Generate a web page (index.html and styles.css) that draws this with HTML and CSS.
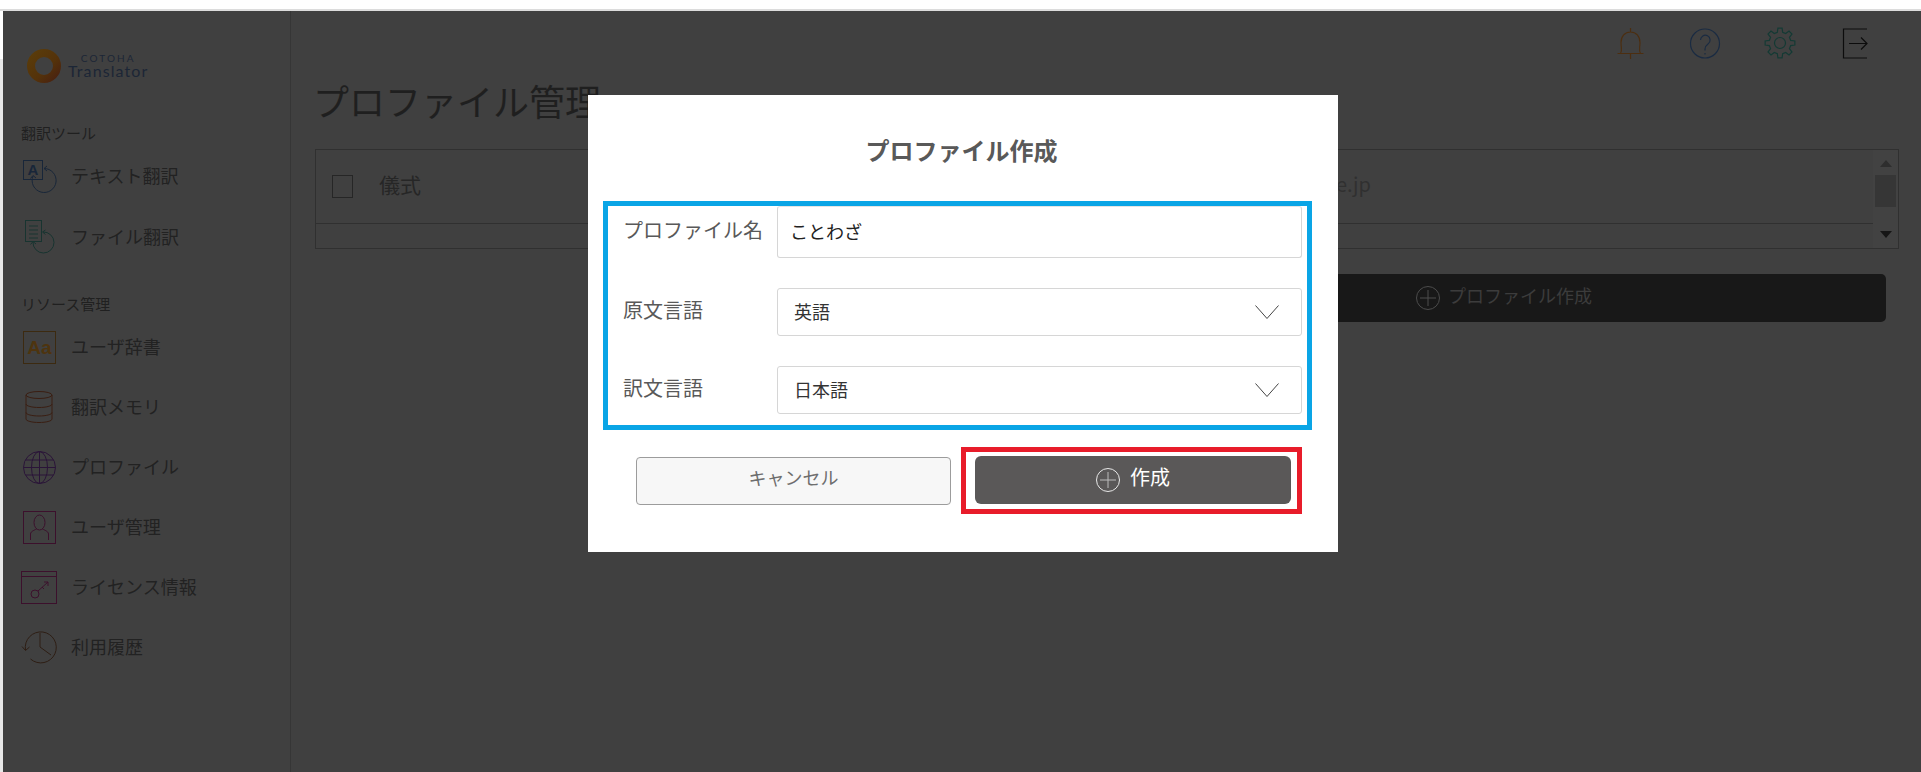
FILE: index.html
```html
<!DOCTYPE html>
<html lang="ja">
<head>
<meta charset="utf-8">
<title>プロファイル管理</title>
<link rel="stylesheet" href="styles.css">
</head>
<body>
<div class="topstrip"></div>
<div class="shell">
  <div class="edge"></div>
  <aside class="sidebar">
    <div class="logo">
      <svg class="logo-ring" width="36" height="36" viewBox="0 0 36 36">
        <defs><linearGradient id="ringg" x1="0" y1="0" x2="1" y2="1"><stop offset="0" stop-color="#5a3c0a"/><stop offset=".6" stop-color="#54320a"/><stop offset="1" stop-color="#4a2210"/></linearGradient></defs>
        <circle cx="18" cy="18" r="13" fill="none" stroke="url(#ringg)" stroke-width="8"/>
      </svg>
      <div class="logo-text"><span class="logo-top">COTOHA</span><span class="logo-bottom">Translator</span></div>
    </div>
    <div class="section-label first">翻訳ツール</div>
    <nav class="nav tight">
      <a class="nav-item"><svg class="nav-icon" viewBox="0 0 38 38" fill="none" stroke="#182639"><rect x="2.500" y="3.500" width="19" height="19"/><text x="12" y="18" class="icon-a">A</text><path d="M23 11.500A12 12 0 1 1 12 19M26 9l-3 2.500 3 2.500M9.500 21.500 12 18.500 15 21"/></svg><span>テキスト翻訳</span></a>
      <a class="nav-item"><svg class="nav-icon" viewBox="0 0 38 38" fill="none" stroke="#183430"><rect x="4.500" y="2.500" width="16" height="21"/><path d="M8 8h9M8 12h9M8 16h9M8 20h9M22 14a10.500 10.500 0 1 1-10 10M24.500 12l-3 2 3 2.500M9.500 26.500l2.500-3 3 2.500"/></svg><span>ファイル翻訳</span></a>
    </nav>
    <div class="section-label second">リソース管理</div>
    <nav class="nav">
      <a class="nav-item"><svg class="nav-icon" viewBox="0 0 38 38" fill="none" stroke="#3c2a10"><rect x="2.500" y="3.500" width="32" height="32"/><text x="18.500" y="26" class="icon-aa">Aa</text></svg><span>ユーザ辞書</span></a>
      <a class="nav-item"><svg class="nav-icon" viewBox="0 0 38 38" fill="none" stroke="#3a1e12"><ellipse cx="18" cy="7" rx="13" ry="3.500"/><path d="M5 7v24c0 2 6 3.500 13 3.500s13-1.500 13-3.500V7M5 16c0 2 6 3.500 13 3.500s13-1.500 13-3.500M5 24.500c0 2 6 3.500 13 3.500s13-1.500 13-3.500"/></svg><span>翻訳メモリ</span></a>
      <a class="nav-item"><svg class="nav-icon" viewBox="0 0 38 38" fill="none" stroke="#2a1438"><circle cx="18.500" cy="19.500" r="16"/><ellipse cx="18.500" cy="19.500" rx="8" ry="16"/><path d="M18.500 3.500v32M2.500 19.500h32M4.500 12h28M4.500 27h28"/></svg><span>プロファイル</span></a>
      <a class="nav-item"><svg class="nav-icon" viewBox="0 0 38 38" fill="none" stroke="#3c102c"><rect x="2.500" y="3.500" width="32" height="32"/><ellipse cx="18.500" cy="14.500" rx="5.500" ry="7.500"/><path d="M9.500 32v-6c0-3 5-4 6.500-5.500M27.500 32v-6c0-3-5-4-6.500-5.500"/></svg><span>ユーザ管理</span></a>
      <a class="nav-item"><svg class="nav-icon" viewBox="0 0 38 38" fill="none" stroke="#3c102c"><rect x=".5" y="3.500" width="35" height="32"/><path d="M.5 8.500h35M17 23l10-9M23 14h4v4M21 19l2 2"/><circle cx="14" cy="26" r="4"/></svg><span>ライセンス情報</span></a>
      <a class="nav-item"><svg class="nav-icon" viewBox="0 0 38 38" fill="none" stroke="#2e1e14"><path d="M4.500 22A15.500 15.500 0 1 1 9.500 31M1 18.500l3.500 4 4-3.500M19 5v14l11 8"/></svg><span>利用履歴</span></a>
    </nav>
  </aside>
  <main class="main">
    <header class="header">
      <svg class="head-icon" viewBox="0 0 30 32" fill="none" stroke="#4c2e10" stroke-width="1.200"><path d="M2.500 25.500h26M5.500 25.500c2-3 .5-6 .5-11C6 8 10 4 15.500 4S25 8 25 14.500c0 5-1.500 8 .5 11M15.500 0v4M15.500 25.500V31"/></svg>
      <svg class="head-icon" viewBox="0 0 30 32" fill="none" stroke="#1a2b42" stroke-width="1.200"><circle cx="15" cy="15.500" r="14.500"/><path d="M10.500 12a4.800 4.800 0 1 1 7.500 4c-2 1.500-3 2.500-3 5v1.500M15 25v1.500"/></svg>
      <svg class="head-icon" viewBox="0 0 30 32" fill="none" stroke="#143a34" stroke-width="1.200"><polygon points="12.340,4.330 12.910,.15 17.090,.15 17.660,4.330 20.670,5.570 24.030,3.020 26.980,5.970 24.430,9.330 25.670,12.340 29.850,12.910 29.850,17.090 25.670,17.660 24.430,20.670 26.980,24.030 24.030,26.980 20.670,24.430 17.660,25.670 17.090,29.850 12.910,29.850 12.340,25.670 9.330,24.430 5.970,26.980 3.020,24.030 5.570,20.670 4.330,17.660 .15,17.090 .15,12.910 4.330,12.340 5.570,9.330 3.020,5.970 5.970,3.020 9.330,5.570"/><circle cx="15" cy="15" r="5.500"/></svg>
      <svg class="head-icon" viewBox="0 0 30 32" fill="none" stroke="#0c0c0c" stroke-width="1.200"><path d="M27 1H3.500v29H27"/><path d="M9 15.500h18M21 9.500l6 6-6 6"/></svg>
    </header>
    <h1 class="page-title">プロファイル管理</h1>
    <div class="table">
      <div class="rows">
        <div class="row head">
          <span class="checkbox"></span>
          <span class="cell-name">儀式</span>
          <span class="cell-mail">e.jp</span>
        </div>
        <div class="row"></div>
      </div>
      <div class="scrollbar">
        <span class="arrow up"></span>
        <span class="thumb"></span>
        <span class="arrow down"></span>
      </div>
    </div>
    <button class="bg-create" type="button">
      <svg class="plus" viewBox="0 0 24 24" fill="none" stroke="#4c4c4c"><circle cx="12" cy="12" r="11.500"/><path d="M12 4v16M4 12h16"/></svg>
      <span class="lift">プロファイル作成</span>
    </button>
  </main>
</div>
<div class="modal-layer">
  <section class="modal">
    <h2 class="modal-title">プロファイル作成</h2>
    <div class="form-box">
      <div class="form-row tall">
        <label class="form-label">プロファイル名</label>
        <input class="text-input" type="text" value="ことわざ">
      </div>
      <div class="form-row">
        <label class="form-label">原文言語</label>
        <div class="select"><span class="lift-small">英語</span><svg class="chev" viewBox="0 0 24 14" fill="none" stroke="#444"><path d="M.5.500 12 13.500 23.500.500"/></svg></div>
      </div>
      <div class="form-row">
        <label class="form-label">訳文言語</label>
        <div class="select"><span class="lift-small">日本語</span><svg class="chev" viewBox="0 0 24 14" fill="none" stroke="#444"><path d="M.5.500 12 13.500 23.500.500"/></svg></div>
      </div>
    </div>
    <div class="actions">
      <button class="btn-cancel" type="button"><span class="lift">キャンセル</span></button>
      <div class="red-box">
        <button class="btn-create" type="button">
          <svg class="plus" viewBox="0 0 24 24" fill="none" stroke="#e8e8e8"><circle cx="12" cy="12" r="11.500"/><path d="M12 4v16M4 12h16" stroke="#bbb"/></svg>
          <span class="lift">作成</span>
        </button>
      </div>
    </div>
  </section>
</div>
</body>
</html>
```
FILE: styles.css
```css
* { box-sizing: border-box; }
html, body { margin: 0; height: 772px; overflow: hidden; }
body {
  background: #fff;
  font-family: "Noto Sans CJK JP", "Noto Sans", sans-serif;
  position: relative;
}
.topstrip { height: 11px; background: #fff; border-bottom: 2px solid #dcdcdc; }
.shell { display: flex; height: 761px; }
.edge { width: 3px; background: linear-gradient(#fff 0, #fff 48px, #e8e8e8 48px, #e8e8e8 100%); }
.lift { display: inline-block; padding-bottom: 7px; }
.lift-small { padding-bottom: 3px; }

.sidebar { width: 288px; flex: none; background: #404040; border-right: 1px solid #363636; }
.logo { display: flex; align-items: center; height: 34px; margin-top: 37px; padding-left: 23px; }
.logo-ring { flex: none; margin-top: 2px; }
.logo-text { display: flex; flex-direction: column; align-items: center; margin-left: 6px; font-family: Lato, sans-serif; color: #1c2636; }
.logo-top { font-size: 10px; line-height: 11px; letter-spacing: 2.1px; }
.logo-bottom { font-size: 16px; line-height: 14px; letter-spacing: 1.1px; }
.section-label { padding-left: 18px; font-size: 15px; line-height: 20px; color: #202020; }
.section-label.first { margin-top: 41px; }
.section-label.second { margin-top: 27px; }
.nav { display: flex; flex-direction: column; margin-top: 3px; }
.nav.tight { gap: 1px; }
.nav-item { display: flex; align-items: center; height: 60px; padding-left: 18px; font-size: 18px; color: #222; }
.nav-item span { padding-bottom: 3px; }
.nav-icon { width: 38px; height: 38px; flex: none; margin-right: 12px; }
.icon-a { font-family: "Liberation Sans", sans-serif; font-size: 15px; font-weight: 700; fill: #182639; stroke: none; text-anchor: middle; }
.icon-aa { font-family: "Liberation Sans", sans-serif; font-size: 19px; font-weight: 700; fill: #4e340e; stroke: none; text-anchor: middle; }

.main { flex: 1; min-width: 0; display: flex; flex-direction: column; background: #404040; padding: 0 22px 0 24px; }
.header { display: flex; justify-content: flex-end; gap: 45px; padding: 17px 29px 0 0; height: 49px; }
.head-icon { width: 30px; height: 32px; flex: none; overflow: visible; }
.page-title { margin: 18px 0 27px -2px; font-size: 36px; line-height: 44px; font-weight: 400; color: #1f1f1f; }

.table { display: flex; height: 100px; border: 1px solid #303030; }
.rows { flex: 1; min-width: 0; }
.row.head { display: flex; align-items: center; height: 74px; padding-left: 16px; border-bottom: 1px solid #303030; }
.checkbox { width: 21px; height: 23px; flex: none; border: 1px solid #262626; }
.cell-name { margin-left: 26px; padding-bottom: 6px; font-size: 21px; color: #262626; }
.cell-mail { margin-left: auto; padding: 0 502px 6px 0; font-size: 20px; color: #303030; }
.scrollbar { width: 25px; flex: none; display: flex; flex-direction: column; align-items: center; background: #424242; }
.arrow { width: 0; height: 0; border-left: 6px solid transparent; border-right: 6px solid transparent; }
.arrow.up { margin-top: 10px; border-bottom: 7px solid #2e2e2e; }
.thumb { width: 21px; height: 32px; margin-top: 8px; background: #363636; }
.arrow.down { margin-top: 24px; border-top: 7px solid #161616; }

.bg-create {
  display: flex; align-items: center; justify-content: center; gap: 8px;
  align-self: flex-end; width: 764px; height: 48px; margin: 25px 13px 0 0;
  background: #181818; border: 0; border-radius: 5px;
  font-family: inherit; font-size: 18px; color: #3c3c3c;
}
.plus { width: 24px; height: 24px; flex: none; }

.modal-layer { position: absolute; inset: 0; display: flex; justify-content: center; padding: 95px 0 0 5px; pointer-events: none; }
.modal { width: 750px; height: 457px; background: #fff; padding: 0 26px 0 15px; pointer-events: auto; }
.modal-title { margin: 0; padding: 35px 2px 31px 10px; font-size: 24px; line-height: 40px; font-weight: 700; text-align: center; color: #595959; }
.form-box { display: flex; flex-direction: column; gap: 30px; height: 229px; border: 5px solid #0aa5e6; padding: 0 5px 11px 0; }
.form-row { display: flex; align-items: center; height: 48px; }
.form-row.tall { height: 52px; }
.form-label { width: 169px; flex: none; padding: 0 0 6px 15px; font-size: 20px; color: #595959; white-space: nowrap; }
.text-input {
  flex: 1; min-width: 0; height: 100%; padding: 0 14px 3px 12px; border: 1px solid #d6d6d6; border-top-color: #e4e4e4; border-radius: 3px;
  font-family: inherit; font-size: 18px; color: #222; background: #fff; outline: 0;
}
.select {
  flex: 1; min-width: 0; height: 100%; display: flex; align-items: center; justify-content: space-between;
  padding: 0 22px 0 16px; border: 1px solid #d6d6d6; border-radius: 3px; font-size: 18px; color: #333;
}
.chev { width: 24px; height: 14px; flex: none; }
.actions { display: flex; align-items: center; gap: 10px; margin-top: 17px; padding-left: 33px; }
.btn-cancel {
  width: 315px; height: 48px; flex: none; background: #f7f7f7; border: 1px solid #9c9c9c; border-radius: 4px;
  font-family: inherit; font-size: 18px; color: #6e6e6e;
}
.red-box { width: 341px; height: 67px; flex: none; border: 5px solid #e81c2a; padding: 4px 6px 0 9px; }
.btn-create {
  width: 316px; height: 48px; display: flex; align-items: center; justify-content: center; gap: 10px;
  background: #5a5858; border: 0; border-radius: 6px; font-family: inherit; font-size: 20px; color: #fff;
}
```
